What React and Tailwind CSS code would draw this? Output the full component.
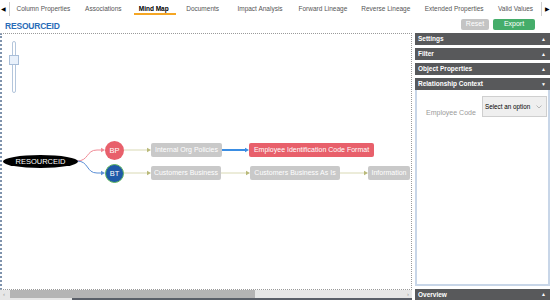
import React from 'react';

const tabs = [
  { label: 'Column Properties', w: 'w-[67px]' },
  { label: 'Associations', w: 'w-[53px]' },
  { label: 'Mind Map', w: 'w-[48px]', active: true },
  { label: 'Documents', w: 'w-[50px]' },
  { label: 'Impact Analysis', w: 'w-[65px]' },
  { label: 'Forward Lineage', w: 'w-[61px]' },
  { label: 'Reverse Lineage', w: 'w-[65px]' },
  { label: 'Extended Properties', w: 'w-[72px]' },
  { label: 'Valid Values', w: 'w-[51px]' },
];

const boxes = [
  { label: 'Internal Org Policies', cls: 'left-[149px] top-[109px] w-[71px] bg-[#c9c9c9]' },
  { label: 'Employee Identification Code Format', cls: 'left-[247px] top-[109px] w-[125px] bg-[#e8606b]' },
  { label: 'Customers Business', cls: 'left-[149px] top-[132px] w-[70px] bg-[#c9c9c9]' },
  { label: 'Customers Business As Is', cls: 'left-[248px] top-[132px] w-[90px] bg-[#c9c9c9]' },
  { label: 'Information', cls: 'left-[366px] top-[132px] w-[42px] bg-[#c9c9c9]' },
];

function PanelHeader({ title, open }) {
  return (
    <div className="h-[12px] shrink-0 bg-[#58595b] flex items-center justify-between pl-[3px] pr-[4px] text-white">
      <span className="text-[6.5px] font-bold">{title}</span>
      <span className="text-[5px] leading-none">{open ? '▼' : '▲'}</span>
    </div>
  );
}

function Arrow({ x, y, color }) {
  return <polygon points={`${x},${y} ${x - 4},${y - 2.2} ${x - 4},${y + 2.2}`} fill={color} />;
}

export default function App() {
  return (
    <div className="w-[550px] h-[300px] overflow-hidden bg-white flex flex-col" style={{ fontFamily: '"Liberation Sans", Arial, sans-serif' }}>
      {/* tab bar */}
      <div className="h-[17px] shrink-0 flex items-center">
        <span className="w-[9px] text-[6px] leading-none pl-[1px] text-black">◀</span>
        <div className="w-px h-[14px] bg-[#cfcfcf]"></div>
        {tabs.map((t) => (
          <div key={t.label} className={`${t.w} h-full flex items-center justify-center relative`}>
            <span className={`text-[6.5px] ${t.active ? 'font-bold text-black' : 'text-[#555]'}`}>{t.label}</span>
            {t.active && <div className="absolute left-[4px] right-[2px] top-[13px] h-[2px] bg-[#f5a623]"></div>}
          </div>
        ))}
        <div className="w-px h-[14px] bg-[#cfcfcf]"></div>
        <span className="ml-[3px] text-[6px] leading-none text-black">▶</span>
      </div>

      {/* title row */}
      <div className="h-[16px] shrink-0 flex items-start justify-between pl-[5px] pr-[15px]">
        <span className="mt-[3px] text-[8.5px] font-bold text-[#2a6cb8] tracking-[-0.2px]">RESOURCEID</span>
        <div className="flex gap-[4px] mt-[2px]">
          <div className="w-[28px] h-[11px] rounded-[2px] bg-[#c4c4c4] text-white text-[7px] flex items-center justify-center">Reset</div>
          <div className="w-[42px] h-[11px] rounded-[2px] bg-[#45ad6a] text-white text-[7px] flex items-center justify-center">Export</div>
        </div>
      </div>

      {/* main */}
      <div className="flex-1 flex">
        <div className="w-[413px] flex flex-col">
          <div className="h-[257px] relative overflow-hidden border border-dotted border-[#9a9a9a] border-l-2 border-l-[#7f93ad]">
            {/* zoom slider */}
            <div className="absolute left-[10px] top-[7px] w-[4px] h-[52px] rounded-[2px] border border-[#b4c6dc] bg-white"></div>
            <div className="absolute left-[7px] top-[21px] w-[10px] h-[10px] border border-[#a9bed8] bg-[#e9f1fb]"></div>

            <svg className="absolute left-0 top-0" width="411" height="255" viewBox="2 34 411 255">
              <path d="M77,161 C89,161 86,150 97,150 L101,150" fill="none" stroke="#f08a95" strokeWidth="1" />
              <Arrow x={105} y={150} color="#f08a95" />
              <path d="M77,161 C89,161 86,173 97,173 L101,173" fill="none" stroke="#5b8fd6" strokeWidth="1" />
              <Arrow x={105} y={173} color="#5b8fd6" />
              <line x1="124" y1="150" x2="148" y2="150" stroke="#d9d9b4" strokeWidth="1" />
              <Arrow x={151} y={150} color="#b9b979" />
              <line x1="222" y1="150" x2="246" y2="150" stroke="#3a8de3" strokeWidth="2" />
              <Arrow x={249} y={150} color="#3a8de3" />
              <line x1="124" y1="173" x2="148" y2="173" stroke="#d9d9b4" strokeWidth="1" />
              <Arrow x={151} y={173} color="#b9b979" />
              <line x1="221" y1="173" x2="247" y2="173" stroke="#d9d9b4" strokeWidth="1" />
              <Arrow x={250} y={173} color="#b9b979" />
              <line x1="340" y1="173" x2="365" y2="173" stroke="#d9d9b4" strokeWidth="1" />
              <Arrow x={368} y={173} color="#b9b979" />
            </svg>

            <div className="absolute left-[1px] top-[121px] w-[75px] h-[13px] rounded-[50%] bg-black text-white text-[7.5px] flex items-center justify-center">RESOURCEID</div>
            <div className="absolute left-[103px] top-[107px] w-[19px] h-[19px] rounded-full bg-[#e8606b] text-white text-[7.5px] flex items-center justify-center">BP</div>
            <div className="absolute left-[103px] top-[130px] w-[19px] h-[19px] rounded-full bg-[#1f5aa8] border border-[#5fb55f] text-white text-[7.5px] flex items-center justify-center">BT</div>
            {boxes.map((b) => (
              <div key={b.label} className={`absolute h-[14px] rounded-[2px] text-white text-[7px] flex items-center justify-center whitespace-nowrap ${b.cls}`}>{b.label}</div>
            ))}
          </div>
          {/* scrollbar */}
          <div className="h-[8px] flex bg-[#e6e6e6]">
            <div className="w-[10px] text-[6px] leading-[8px] text-[#999] pl-[3px]">‹</div>
            <div className="w-[245px] bg-[#b4b4b4]"></div>
            <div className="flex-1 text-right pr-[3px] text-[6px] leading-[8px] text-[#999]">›</div>
          </div>
          <div className="h-[2px] flex">
            <div className="w-[72px] bg-[#e6e6e6]"></div>
            <div className="flex-1 bg-[#5a5f68]"></div>
          </div>
        </div>

        {/* right panel */}
        <div className="ml-[3px] flex-1 flex flex-col">
          <div className="flex flex-col gap-[3px]">
            <PanelHeader title="Settings" />
            <PanelHeader title="Filter" />
            <PanelHeader title="Object Properties" />
            <PanelHeader title="Relationship Context" open />
          </div>
          <div className="flex-1 border-2 border-t-0 border-[#c8d6e8] flex items-start pt-[6px] pl-[9px] pr-[1px]">
            <span className="mt-[12px] w-[56px] text-[7px] text-[#9a9a9a]">Employee Code</span>
            <div className="w-[65px] h-[21px] bg-[#efefef] border border-[#cfcfcf] flex items-center justify-between pl-[2px] pr-[4px]">
              <span className="text-[6.3px] text-black whitespace-nowrap">Select an option</span>
              <svg width="6" height="4" viewBox="0 0 6 4"><path d="M0.5,0.5 L3,3 L5.5,0.5" fill="none" stroke="#a8a8a8" strokeWidth="0.8" /></svg>
            </div>
          </div>
          <div className="h-[3px]"></div>
          <div className="h-[11px] bg-[#58595b] flex items-center justify-between pl-[3px] pr-[4px] text-white">
            <span className="text-[6.5px] font-bold">Overview</span>
            <span className="text-[5px] leading-none">▲</span>
          </div>
        </div>
      </div>
    </div>
  );
}
